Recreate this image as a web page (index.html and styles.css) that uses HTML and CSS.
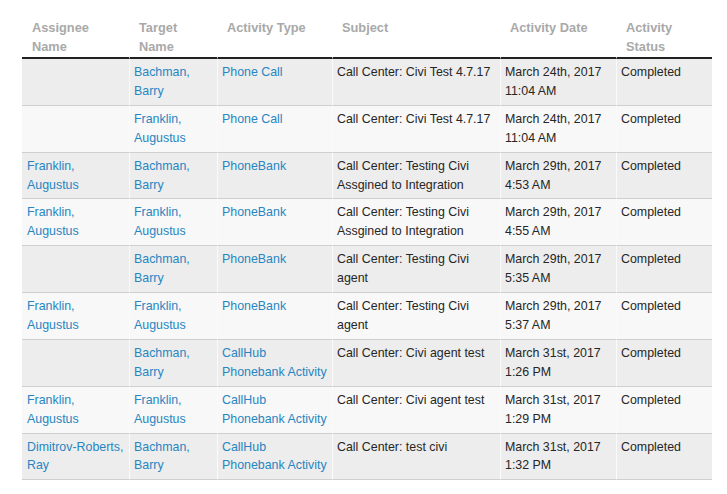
FILE: index.html
```html
<!DOCTYPE html>
<html>
<head>
<meta charset="utf-8">
<link rel="stylesheet" href="styles.css">
</head>
<body>
<div class="wrap">
<table class="activities">
  <colgroup>
    <col class="c-assignee">
    <col class="c-target">
    <col class="c-type">
    <col class="c-subject">
    <col class="c-date">
    <col class="c-status">
  </colgroup>
  <thead>
    <tr>
      <th>Assignee Name</th>
      <th>Target Name</th>
      <th>Activity Type</th>
      <th>Subject</th>
      <th>Activity Date</th>
      <th>Activity Status</th>
    </tr>
  </thead>
  <tbody>
    <tr>
      <td></td>
      <td><a href="#">Bachman, Barry</a></td>
      <td><a href="#">Phone Call</a></td>
      <td>Call Center: Civi Test 4.7.17</td>
      <td>March 24th, 2017<br>11:04 AM</td>
      <td>Completed</td>
    </tr>
    <tr>
      <td></td>
      <td><a href="#">Franklin, Augustus</a></td>
      <td><a href="#">Phone Call</a></td>
      <td>Call Center: Civi Test 4.7.17</td>
      <td>March 24th, 2017<br>11:04 AM</td>
      <td>Completed</td>
    </tr>
    <tr>
      <td><a href="#">Franklin, Augustus</a></td>
      <td><a href="#">Bachman, Barry</a></td>
      <td><a href="#">PhoneBank</a></td>
      <td>Call Center: Testing Civi Assgined to Integration</td>
      <td>March 29th, 2017<br>4:53 AM</td>
      <td>Completed</td>
    </tr>
    <tr>
      <td><a href="#">Franklin, Augustus</a></td>
      <td><a href="#">Franklin, Augustus</a></td>
      <td><a href="#">PhoneBank</a></td>
      <td>Call Center: Testing Civi Assgined to Integration</td>
      <td>March 29th, 2017<br>4:55 AM</td>
      <td>Completed</td>
    </tr>
    <tr>
      <td></td>
      <td><a href="#">Bachman, Barry</a></td>
      <td><a href="#">PhoneBank</a></td>
      <td>Call Center: Testing Civi agent</td>
      <td>March 29th, 2017<br>5:35 AM</td>
      <td>Completed</td>
    </tr>
    <tr>
      <td><a href="#">Franklin, Augustus</a></td>
      <td><a href="#">Franklin, Augustus</a></td>
      <td><a href="#">PhoneBank</a></td>
      <td>Call Center: Testing Civi agent</td>
      <td>March 29th, 2017<br>5:37 AM</td>
      <td>Completed</td>
    </tr>
    <tr>
      <td></td>
      <td><a href="#">Bachman, Barry</a></td>
      <td><a href="#">CallHub Phonebank Activity</a></td>
      <td>Call Center: Civi agent test</td>
      <td>March 31st, 2017<br>1:26 PM</td>
      <td>Completed</td>
    </tr>
    <tr>
      <td><a href="#">Franklin, Augustus</a></td>
      <td><a href="#">Franklin, Augustus</a></td>
      <td><a href="#">CallHub Phonebank Activity</a></td>
      <td>Call Center: Civi agent test</td>
      <td>March 31st, 2017<br>1:29 PM</td>
      <td>Completed</td>
    </tr>
    <tr>
      <td><a href="#">Dimitrov-Roberts, Ray</a></td>
      <td><a href="#">Bachman, Barry</a></td>
      <td><a href="#">CallHub Phonebank Activity</a></td>
      <td>Call Center: test civi</td>
      <td>March 31st, 2017<br>1:32 PM</td>
      <td>Completed</td>
    </tr>
  </tbody>
</table>
</div>
</body>
</html>
```
FILE: styles.css
```css
html, body {
  margin: 0;
  padding: 0;
  background: #fff;
}

.wrap {
  padding: 14px 15px 0 22px;
  font-family: "Liberation Sans", Arial, Helvetica, sans-serif;
}

.activities {
  width: 690px;
  table-layout: fixed;
  border-collapse: separate;
  border-spacing: 0;
}

.c-assignee { width: 107px; }
.c-target { width: 88px; }
.c-type { width: 115px; }
.c-subject { width: 168px; }
.c-date { width: 116px; }
.c-status { width: 96px; }

.activities th {
  text-align: left;
  vertical-align: top;
  font-size: 12.8px;
  font-weight: bold;
  line-height: 19px;
  color: #a9a9a9;
  padding: 4px 8px 1px 9px;
  border-left: 1px solid #fff;
  border-bottom: 2px solid #222;
}

.activities th:first-child {
  border-left: 0;
  padding-left: 10px;
}

.activities td {
  vertical-align: top;
  font-size: 12.4px;
  line-height: 18.9px;
  color: #262626;
  padding: 4px 3px 4px 4px;
  border-left: 1px solid #fafafa;
  border-bottom: 1px solid #cfcfcf;
  background: #f8f8f8;
}

.activities td:first-child {
  border-left: 0;
  padding-left: 5px;
  padding-right: 2px;
}

.activities tbody tr:nth-child(odd) td {
  background: #ededed;
}

.activities a {
  color: #2786c2;
  text-decoration: none;
}
```
